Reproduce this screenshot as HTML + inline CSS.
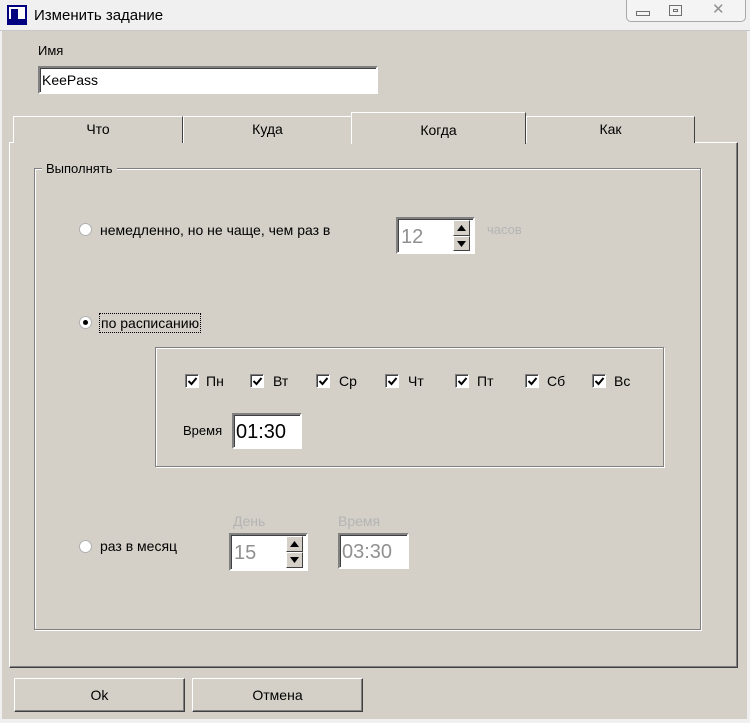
<!DOCTYPE html>
<html><head><meta charset="utf-8"><style>
*{box-sizing:border-box;margin:0;padding:0}
body{width:750px;height:723px;background:#d4d0c8;position:relative;overflow:hidden;font-family:"Liberation Sans","DejaVu Sans",sans-serif;font-size:13px;color:#000}
.a{position:absolute}
.t{position:absolute;white-space:nowrap;line-height:16px}
.in{position:absolute;background:#fff;border:2px solid;border-color:#808080 #fff #fff #808080;box-shadow:inset 1px 1px 0 #404040}
.tab{position:absolute;background:#d4d0c8;border:1px solid;border-color:#fff #404040 transparent #fff;border-bottom:none;text-align:center;line-height:24px;font-size:14px}
.etch{position:absolute;border:1px solid #808080;box-shadow:1px 1px 0 #fff, inset 1px 1px 0 #fff}
.rad{position:absolute;width:13px;height:13px;border-radius:50%;background:#fff;border:1px solid #b0b0b0}
.cb{position:absolute;width:14px;height:14px;background:#fff;border:1px solid;border-color:#808080 #fff #fff #808080;box-shadow:inset 1px 1px 0 #404040}
.cb svg{position:absolute;left:1px;top:1px}
.btn{position:absolute;border:1px solid;border-color:#fff #404040 #404040 #fff;box-shadow:inset -1px -1px 0 #808080;text-align:center;font-size:14px}
.spin{position:absolute;width:17px;background:#d4d0c8;border:1px solid;border-color:#fff #404040 #404040 #fff}
.g{color:#a0a0a0}
</style></head><body>
<div class="a" style="left:0;top:0;width:750px;height:31px;background:#f0f0f0;border-bottom:1px solid #c8c8c8"></div>
<div class="a" style="left:7px;top:5px;width:20px;height:20px;background:#fff;border:2px solid #000080"><div class="a" style="left:2px;top:2px;width:7px;height:10px;background:#000080"></div><div class="a" style="left:0;top:12px;width:16px;height:4px;background:#000080"></div></div>
<div class="t" style="left:34px;top:8px;font-size:15px">Изменить задание</div>
<div class="a" style="left:626px;top:0;width:120px;height:22px;border:1px solid #a8a8a8;border-top:none;border-radius:0 0 5px 5px;background:#f4f4f4"></div>
<div class="a" style="left:636px;top:11px;width:14px;height:5px;border:1px solid #707070"></div>
<div class="a" style="left:669px;top:5px;width:13px;height:11px;border:1px solid #707070"><div class="a" style="left:3px;top:3px;width:5px;height:3px;border:1px solid #707070"></div></div>
<div class="t" style="left:712px;top:2px;color:#909090;font-size:15px">✕</div>
<div class="a" style="left:0;top:31px;width:2px;height:692px;background:#f0f0f0"></div>
<div class="a" style="left:747px;top:31px;width:3px;height:692px;background:#f0f0f0"></div>
<div class="a" style="left:0;top:719px;width:750px;height:4px;background:#f0f0f0"></div>

<div class="t" style="left:38px;top:43px">Имя</div>
<div class="in" style="left:38px;top:66px;width:340px;height:28px"><div class="t" style="left:2px;top:4px;font-size:14px">KeePass</div></div>

<div class="a" style="left:9px;top:142px;width:729px;height:526px;border:1px solid;border-color:#fff #404040 #404040 #fff;box-shadow:inset -1px -1px 0 #808080"></div>
<div class="tab" style="left:13px;top:116px;width:170px;height:27px">Что</div>
<div class="tab" style="left:183px;top:116px;width:169px;height:27px">Куда</div>
<div class="tab" style="left:526px;top:116px;width:169px;height:27px">Как</div>
<div class="tab" style="left:351px;top:112px;width:175px;height:32px;line-height:34px">Когда</div>

<div class="etch" style="left:34px;top:168px;width:667px;height:462px"></div>
<div class="t" style="left:42px;top:161px;background:#d4d0c8;padding:0 4px">Выполнять</div>

<div class="rad" style="left:79px;top:223px"></div>
<div class="t" style="left:100px;top:222px;font-size:14px">немедленно, но не чаще, чем раз в</div>
<div class="in" style="left:396px;top:217px;width:79px;height:37px"><div class="t g" style="left:3px;top:7px;font-size:20px;line-height:22px;color:#909090">12</div>
<div class="spin" style="left:55px;top:1px;height:16px"><svg width="15" height="14"><path d="M3 10h9L7.5 4z"/></svg></div>
<div class="spin" style="left:55px;top:17px;height:15px"><svg width="15" height="13"><path d="M3 4h9L7.5 10z"/></svg></div></div>
<div class="t g" style="left:487px;top:222px;color:#b4b4b4">часов</div>

<div class="rad" style="left:79px;top:316px"><div class="a" style="left:3px;top:3px;width:5px;height:5px;border-radius:50%;background:#000"></div></div>
<div class="t" style="left:99px;top:313px;font-size:14px;border:1px dotted #000;padding:0 1px;height:20px;line-height:18px">по расписанию</div>

<div class="etch" style="left:155px;top:347px;width:509px;height:120px"></div>
<div class="cb" style="left:185px;top:374px"><svg width="11" height="11"><path d="M1.5 5l3 3 5-6" stroke="#000" stroke-width="2" fill="none"/></svg></div><div class="t" style="left:206px;top:373px;font-size:14px">Пн</div>
<div class="cb" style="left:250px;top:374px"><svg width="11" height="11"><path d="M1.5 5l3 3 5-6" stroke="#000" stroke-width="2" fill="none"/></svg></div><div class="t" style="left:273px;top:373px;font-size:14px">Вт</div>
<div class="cb" style="left:316px;top:374px"><svg width="11" height="11"><path d="M1.5 5l3 3 5-6" stroke="#000" stroke-width="2" fill="none"/></svg></div><div class="t" style="left:339px;top:373px;font-size:14px">Ср</div>
<div class="cb" style="left:385px;top:374px"><svg width="11" height="11"><path d="M1.5 5l3 3 5-6" stroke="#000" stroke-width="2" fill="none"/></svg></div><div class="t" style="left:408px;top:373px;font-size:14px">Чт</div>
<div class="cb" style="left:455px;top:374px"><svg width="11" height="11"><path d="M1.5 5l3 3 5-6" stroke="#000" stroke-width="2" fill="none"/></svg></div><div class="t" style="left:477px;top:373px;font-size:14px">Пт</div>
<div class="cb" style="left:525px;top:374px"><svg width="11" height="11"><path d="M1.5 5l3 3 5-6" stroke="#000" stroke-width="2" fill="none"/></svg></div><div class="t" style="left:547px;top:373px;font-size:14px">Сб</div>
<div class="cb" style="left:592px;top:374px"><svg width="11" height="11"><path d="M1.5 5l3 3 5-6" stroke="#000" stroke-width="2" fill="none"/></svg></div><div class="t" style="left:614px;top:373px;font-size:14px">Вс</div>

<div class="t" style="left:183px;top:423px">Время</div>
<div class="in" style="left:232px;top:413px;width:70px;height:36px"><div class="t" style="left:2px;top:6px;font-size:20px;line-height:22px">01:30</div></div>

<div class="rad" style="left:79px;top:540px"></div>
<div class="t" style="left:100px;top:538px;font-size:14px">раз в месяц</div>
<div class="t" style="left:233px;top:513px;color:#b4b4b4;font-size:14px">День</div>
<div class="t" style="left:338px;top:513px;color:#b4b4b4;font-size:14px">Время</div>
<div class="in" style="left:229px;top:533px;width:79px;height:38px"><div class="t" style="left:3px;top:7px;font-size:20px;line-height:22px;color:#909090">15</div>
<div class="spin" style="left:55px;top:1px;height:16px"><svg width="15" height="14"><path d="M3 10h9L7.5 4z"/></svg></div>
<div class="spin" style="left:55px;top:17px;height:16px"><svg width="15" height="13"><path d="M3 4h9L7.5 10z"/></svg></div></div>
<div class="in" style="left:338px;top:533px;width:71px;height:36px"><div class="t" style="left:2px;top:6px;font-size:20px;line-height:22px;color:#909090">03:30</div></div>

<div class="btn" style="left:14px;top:678px;width:171px;height:34px;line-height:32px">Ok</div>
<div class="btn" style="left:192px;top:678px;width:171px;height:34px;line-height:32px">Отмена</div>
</body></html>
